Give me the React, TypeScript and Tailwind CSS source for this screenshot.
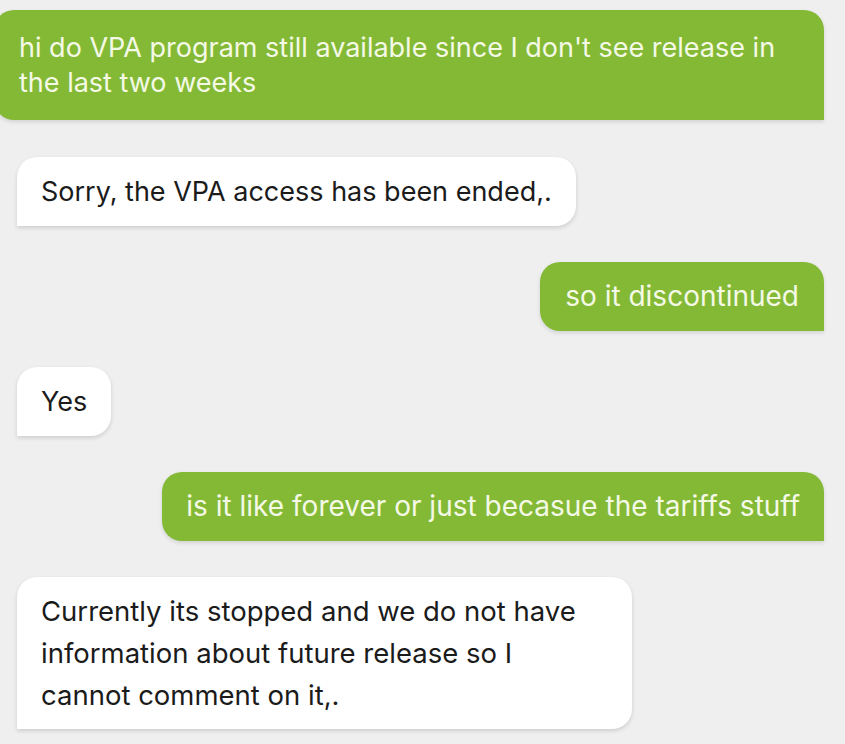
const messages = [
  {
    mine: true,
    text: "hi do VPA program still available since I don't see release in the last two weeks",
    extra: "-ml-[6px] mb-[1px] w-[830px] px-[25px] py-[20px] text-[27px] leading-[35px]",
  },
  { mine: false, text: "Sorry, the VPA access has been ended,.", extra: "px-[24px] py-[17px] text-[27px] leading-[35px]" },
  { mine: true, text: "so it discontinued", extra: "px-[25px] py-[17px] text-[28px] leading-[35px]" },
  { mine: false, text: "Yes", extra: "px-[24px] py-[17px] text-[27px] leading-[35px]" },
  {
    mine: true,
    text: "is it like forever or just becasue the tariffs stuff",
    extra: "px-[24px] py-[17px] text-[28px] leading-[35px]",
  },
  {
    mine: false,
    text: "Currently its stopped and we do not have information about future release so I cannot comment on it,.",
    extra: "w-[615px] pl-[24px] pr-[40px] py-[13px] text-[27.5px] leading-[42px]",
  },
];

export default function App() {
  return (
    <div className="min-h-[744px] w-[845px] overflow-hidden bg-[#efefef] pt-[10px] font-['Inter',sans-serif]">
      <div className="flex flex-col gap-[36px]">
        {messages.map((m, i) =>
          m.mine ? (
            <div key={i} className="flex justify-end pr-[21px]">
              <div
                className={`rounded-[20px] rounded-br-none bg-[#84b936] text-[#f4f9e6] shadow-[0_2px_4px_rgba(0,0,0,0.12)] ${m.extra}`}
              >
                {m.text}
              </div>
            </div>
          ) : (
            <div key={i} className="flex justify-start pl-[17px]">
              <div
                className={`rounded-[20px] rounded-bl-none bg-white text-[#1b1b1b] shadow-[0_2px_4px_rgba(0,0,0,0.14)] ${m.extra}`}
              >
                {m.text}
              </div>
            </div>
          )
        )}
      </div>
    </div>
  );
}
